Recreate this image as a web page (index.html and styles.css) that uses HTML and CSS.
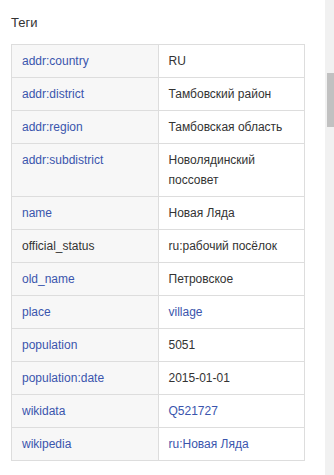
FILE: index.html
```html
<!DOCTYPE html>
<html lang="ru">
<head>
<meta charset="utf-8">
<link rel="stylesheet" href="styles.css">
</head>
<body>
<div class="page">
  <div class="content">
    <h3 class="title">Теги</h3>
    <table class="tags">
      <tr><td class="key"><a>addr:country</a></td><td>RU</td></tr>
      <tr><td class="key"><a>addr:district</a></td><td>Тамбовский район</td></tr>
      <tr><td class="key"><a>addr:region</a></td><td>Тамбовская область</td></tr>
      <tr><td class="key"><a>addr:subdistrict</a></td><td>Новолядинский поссовет</td></tr>
      <tr><td class="key"><a>name</a></td><td>Новая Ляда</td></tr>
      <tr><td class="key">official_status</td><td>ru:рабочий посёлок</td></tr>
      <tr><td class="key"><a>old_name</a></td><td>Петровское</td></tr>
      <tr><td class="key"><a>place</a></td><td><a>village</a></td></tr>
      <tr><td class="key"><a>population</a></td><td>5051</td></tr>
      <tr><td class="key"><a>population:date</a></td><td>2015-01-01</td></tr>
      <tr><td class="key"><a>wikidata</a></td><td><a>Q521727</a></td></tr>
      <tr><td class="key"><a>wikipedia</a></td><td><a>ru:Новая Ляда</a></td></tr>
    </table>
  </div>
  <div class="scrollbar"><div class="thumb"></div></div>
</div>
</body>
</html>
```

FILE: styles.css
```css
html, body {
  margin: 0;
  padding: 0;
  background: #fff;
}
body {
  font-family: "Liberation Sans", Arial, sans-serif;
  color: #333;
}
.page {
  display: flex;
  width: 334px;
  height: 475px;
  overflow: hidden;
}
.content {
  width: 325px;
  flex: none;
  padding: 13px 20px 0 11px;
  box-sizing: border-box;
}
.title {
  margin: 0 0 11px 0;
  font-size: 13px;
  font-weight: normal;
  line-height: 20px;
  color: #333;
}
.tags {
  width: 294px;
  border-collapse: collapse;
  table-layout: fixed;
  font-size: 12px;
  line-height: 20px;
}
.tags td {
  border: 1px solid #ddd;
  padding: 6px 10px;
  vertical-align: top;
  width: 50%;
  color: #333;
}
.tags td.key {
  background: #f7f7f7;
  color: #333;
}
.tags a {
  color: #3a55ad;
  text-decoration: none;
}
.scrollbar {
  flex: none;
  width: 9px;
  background: #f1f1f1;
  display: flex;
  flex-direction: column;
  align-items: flex-end;
}
.thumb {
  margin-top: 73px;
  width: 7px;
  height: 54px;
  background: #c1c1c1;
}
```
